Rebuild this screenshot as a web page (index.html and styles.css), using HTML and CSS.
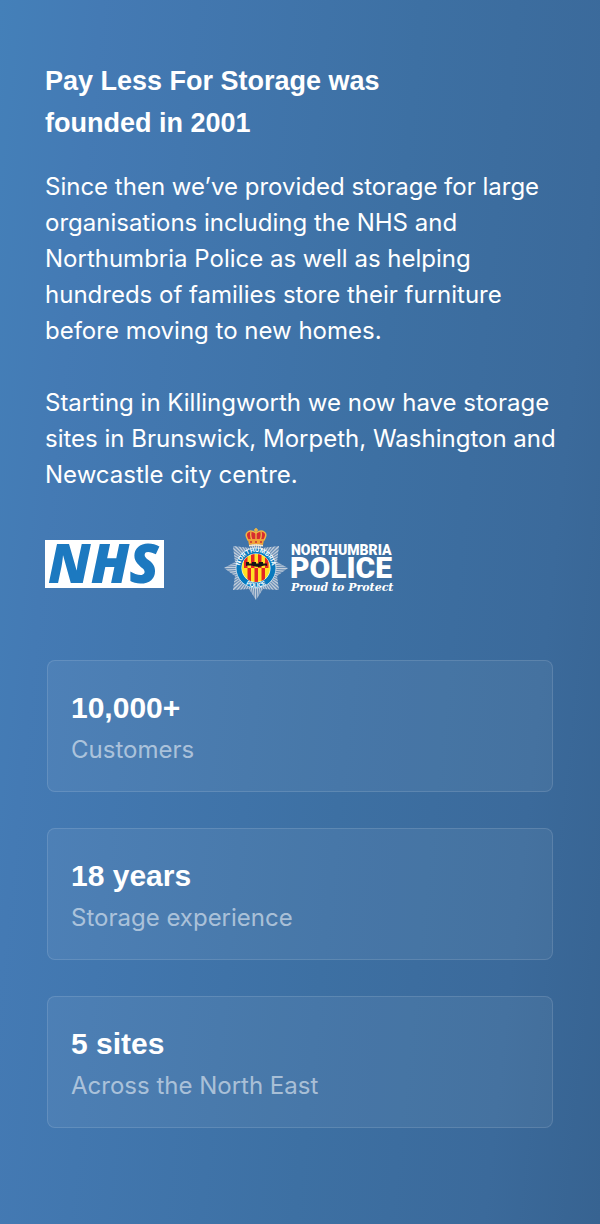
FILE: index.html
```html
<!DOCTYPE html>
<html lang="en">
<head>
<meta charset="utf-8">
<meta name="viewport" content="width=device-width, initial-scale=1">
<title>Pay Less For Storage</title>
<link rel="stylesheet" href="styles.css">
</head>
<body>
<main class="about">
  <section class="story">
    <h1 class="title">Pay Less For Storage was founded in 2001</h1>
    <div class="copy">
      <p>Since then we’ve provided storage for large organisations including the NHS and Northumbria Police as well as helping hundreds of families store their furniture before moving to new homes.</p>
      <p>Starting in Killingworth we now have storage sites in Brunswick, Morpeth, Washington and Newcastle city centre.</p>
    </div>
    <div class="logos">
      <svg class="logo" width="119" height="48" viewBox="0 0 119 48" role="img" aria-label="NHS">
        <rect width="119" height="48" fill="#fff"/>
        <text x="3" y="43" class="nhs-text">NHS</text>
      </svg>
      <svg class="logo" width="171" height="72" viewBox="0 0 171 72" role="img" aria-label="Northumbria Police, Proud to Protect">
        <defs>
          <clipPath id="star"><path d="M32 72 L25 61 L9 62 L11 48 L0 40 L11 34 L9 18 L26 20 L32 8 L38 20 L55 18 L53 34 L64 40 L53 48 L55 62 L39 61 Z"/></clipPath>
          <clipPath id="shield"><circle cx="32" cy="40" r="14"/></clipPath>
          <path id="arc-top" d="M17 45.500 A16 16 0 1 1 47 45.500"/>
          <path id="arc-bottom" d="M13 44 A19.400 19.400 0 0 0 51 44"/>
        </defs>
        <g clip-path="url(#star)">
          <rect width="64" height="72" fill="#7f9cbd" opacity=".7"/>
          <circle cx="32" cy="40" r="17" fill="none" stroke="#c3cedb" stroke-width="34" pathLength="128" stroke-dasharray="1 1"/>
        </g>
        <circle cx="32" cy="40" r="20" fill="#0879bd" stroke="#dce6ef" stroke-width=".8"/>
        <circle cx="32" cy="40" r="14.500" fill="#fff"/>
        <g clip-path="url(#shield)">
          <rect x="18" y="26" width="28" height="28" fill="#ffe125"/>
          <path d="M20 26h3.500v14H20zM27 26h3.500v14H27zM34 26h3.500v14H34zM41 26h3.500v14H41zM23.500 40H27v14h-3.500zM30.500 40H34v14h-3.500zM37.500 40H41v14h-3.500z" fill="#e32626"/>
          <path d="M22 34h3v1.500h3V34h4v1.500h3V34h4v1.500h4v2.500c-4-1.500-6 1.500-10 .8s-7-1.800-11-.8z" fill="#161616"/>
        </g>
        <text class="ring-text"><textPath href="#arc-top" startOffset="50%" text-anchor="middle">NORTHUMBRIA</textPath></text>
        <text class="ring-text"><textPath href="#arc-bottom" startOffset="50%" text-anchor="middle">POLICE</textPath></text>
        <g>
          <path d="M24 12 C19 4 26 1 32 5 C38 1 45 4 40 12 Z" fill="#d72d2f" stroke="#efb545" stroke-width="1.500"/>
          <path d="M32 4v8M27 4q-1 4 1 8M37 4q1 4-1 8" stroke="#efb545" stroke-width="1.300" fill="none"/>
          <path d="M30 2h4M32 0v5" stroke="#f4b741" stroke-width="1.600"/>
          <path d="M24 12q8-2 16 0l-1 5q-7-1.500-14 0z" fill="#f0a338"/>
          <path d="M25 17q7-1.500 14 0v1.500q-7-1.500-14 0z" fill="#f5e8d2"/>
          <path d="M26 14h2M31 14h2M36 14h2" stroke="#c92f35" stroke-width="1.500"/>
        </g>
        <text x="67" y="27" class="force-name">NORTHUMBRIA</text>
        <text x="66" y="50" class="force-police">POLICE</text>
        <text x="67" y="63" class="force-motto">Proud to Protect</text>
      </svg>
    </div>
  </section>
  <section class="stats" aria-label="Our numbers">
    <div class="stat"><strong>10,000+</strong><span>Customers</span></div>
    <div class="stat"><strong>18 years</strong><span>Storage experience</span></div>
    <div class="stat"><strong>5 sites</strong><span>Across the North East</span></div>
  </section>
</main>
</body>
</html>
```

FILE: styles.css
```css
* { box-sizing: border-box; }

body {
  margin: 0;
  color: #fff;
  font-family: Inter, "Liberation Sans", sans-serif;
}

.about {
  display: flex;
  flex-direction: column;
  gap: 60px;
  min-height: 100vh;
  padding: 60px 45px 96px;
  background: linear-gradient(96deg, #4480b9 0%, #447ab4 14%, #3d70a3 58%, #3b6a9b 84%, #376391 100%);
}

.title {
  max-width: 400px;
  margin: 0 0 25px;
  font: bold 27px/42px "Liberation Sans", Arial, sans-serif;
}

.copy {
  display: grid;
  gap: 36px;
  margin-right: -8px;
  font-size: 24px;
  line-height: 36px;
}

.copy p { margin: 0; }

.logos {
  display: flex;
  align-items: center;
  gap: 60px;
  margin-top: 35px;
}

.logo { overflow: visible; }

.nhs-text {
  fill: #1c79c0;
  font: italic 800 54px "Open Sans", sans-serif;
}

.ring-text {
  fill: #fff;
  font: bold 6px Inter, sans-serif;
}

.force-name,
.force-police,
.force-motto { fill: #fff; }

.force-name { font: 900 14px Roboto, sans-serif; }
.force-police { font: 900 30px Roboto, sans-serif; }
.force-motto { font: italic bold 11px "DejaVu Serif", serif; }

.stats {
  display: grid;
  gap: 36px;
  padding: 0 2px;
}

.stat {
  display: flex;
  flex-direction: column;
  padding: 23px;
  border: 1px solid rgba(255, 255, 255, .12);
  border-radius: 8px;
  background: rgba(255, 255, 255, .055);
}

.stat strong {
  font: bold 30px/48px "Liberation Sans", Arial, sans-serif;
}

.stat span {
  color: rgba(255, 255, 255, .55);
  font-size: 24px;
  line-height: 36px;
}
```
